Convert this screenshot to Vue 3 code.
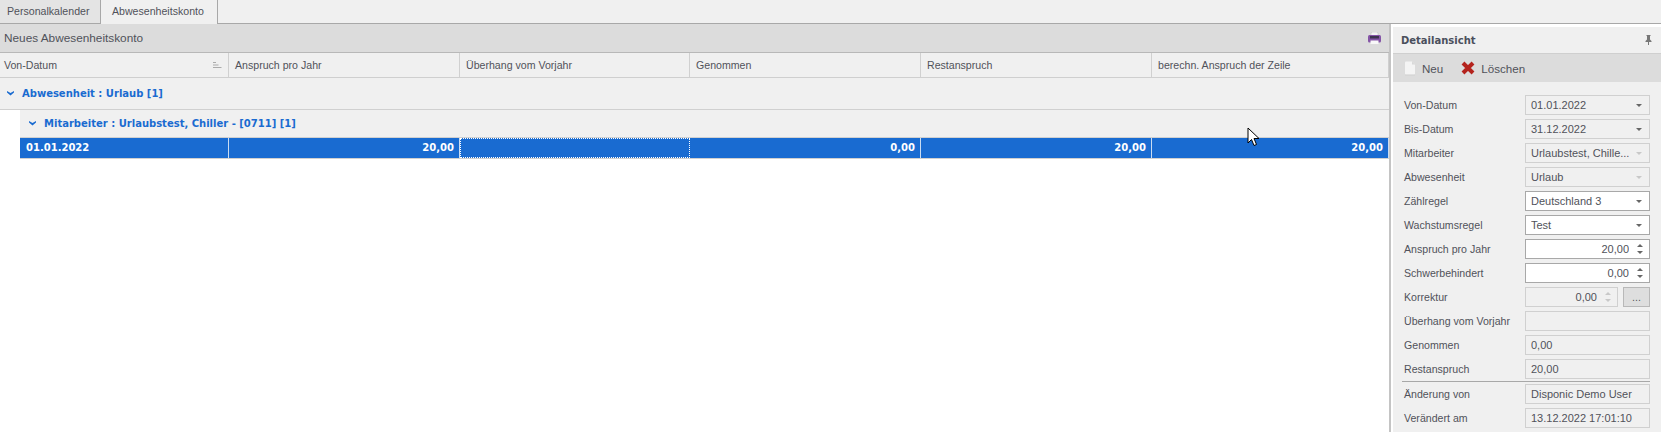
<template>
  <div class="app">
    <div class="tabs">
      <div class="tab">Personalkalender</div>
      <div class="tab active">Abwesenheitskonto</div>
    </div>
    <div class="body">
      <div class="main">
        <div class="title-bar">
          <span>Neues Abwesenheitskonto</span>
          <svg class="printer" width="13" height="12" viewBox="0 0 13 12">
            <path d="M3 4v-2.500q0-1.500 1.500-1.500h4q1.500 0 1.500 1.500v2.500z" fill="#f4f4f4" stroke="#bbb" stroke-width="0.500" />
            <rect x="0" y="3" width="13" height="7.500" rx="1.500" fill="#8454a6" />
            <rect x="2" y="4" width="9" height="2.500" fill="#3d3350" />
            <rect x="2.500" y="8.500" width="8" height="3.500" fill="#f8f8f8" />
          </svg>
        </div>
        <div class="grid-head">
          <div v-for="(c, i) in columns" :key="c" class="head-cell" :style="{ width: widths[i] + 'px' }">
            {{ c }}
            <svg v-if="i === 0" class="sort" width="9" height="7" viewBox="0 0 9 7">
              <path d="M0 .5h3M0 3h5.500M0 5.500h8.500" stroke="#aaa" fill="none" />
            </svg>
          </div>
        </div>
        <div class="group first">
          <svg class="chev" width="7" height="5" viewBox="0 0 7 5"><path d="M0 0l3.500 2 3.500-2v1.500l-3.500 3-3.500-3z" fill="#1a6bd0" /></svg>
          Abwesenheit : Urlaub [1]
        </div>
        <div class="indented">
          <div class="group second">
            <svg class="chev" width="7" height="5" viewBox="0 0 7 5"><path d="M0 0l3.500 2 3.500-2v1.500l-3.500 3-3.500-3z" fill="#1a6bd0" /></svg>
            Mitarbeiter : Urlaubstest, Chiller - [0711] [1]
          </div>
          <div class="row">
            <div v-for="(v, i) in rowCells" :key="i" class="cell" :class="{ left: i === 0, focus: i === 2 }" :style="{ width: (i === 0 ? widths[0] - 20 : widths[i]) + 'px' }">{{ v }}</div>
          </div>
        </div>
      </div>
      <div class="side">
        <div class="side-title">
          <span>Detailansicht</span>
          <svg width="7" height="10" viewBox="0 0 7 10">
            <path d="M1.500 0h4v1h-.5v3.500l1.500 1.500v1h-2.500v3h-1v-3h-2.500v-1l1.500-1.500v-3.500h-.5z" fill="#777" />
          </svg>
        </div>
        <div class="side-tools">
          <span class="tool new">
            <svg width="12" height="15" viewBox="0 0 12 15">
              <path d="M1 1.500q0-1 1-1h6l3 3v9.500q0 1-1 1h-8q-1 0-1-1z" fill="#f4f4f4" />
              <path d="M8 .5v3h3z" fill="#d8d8d8" />
              <path d="M1 14h10" stroke="#cfcfcf" />
            </svg>
            Neu
          </span>
          <span class="tool">
            <svg width="14" height="14" viewBox="0 0 14 14">
              <path d="M2 2l10 10M12 2l-10 10" stroke="#b4231d" stroke-width="4" />
            </svg>
            Löschen
          </span>
        </div>
        <div class="form">
          <div v-for="f in fields" :key="f.label" class="field" :class="f.cls">
            <label>{{ f.label }}</label>
            <div class="input" :class="[f.kind, { off: f.off }]">
              <span class="val">{{ f.value }}</span>
              <svg v-if="f.kind === 'combo'" class="caret" width="6" height="3" viewBox="0 0 6 3"><path d="M0 0h6l-3 3z" /></svg>
              <span v-if="f.kind === 'number'" class="spin">
                <svg width="6" height="3" viewBox="0 0 6 3"><path d="M0 3h6l-3-3z" /></svg>
                <svg width="6" height="3" viewBox="0 0 6 3"><path d="M0 0h6l-3 3z" /></svg>
              </span>
            </div>
            <button v-if="f.more" class="more">...</button>
          </div>
        </div>
      </div>
    </div>
    <svg class="cursor" width="13" height="20" viewBox="0 0 13 20">
      <path d="M1 1v15l3.500-3.500 2.500 6 2.500-1-2.500-6h5z" fill="#fff" stroke="#000" stroke-width="1" />
    </svg>
  </div>
</template>

<script setup>
const columns = ['Von-Datum', 'Anspruch pro Jahr', 'Überhang vom Vorjahr', 'Genommen', 'Restanspruch', 'berechn. Anspruch der Zeile']
const widths = [229, 231, 230, 231, 231, 237]
const rowCells = ['01.01.2022', '20,00', '', '0,00', '20,00', '20,00']
const fields = [
  { label: 'Von-Datum', value: '01.01.2022', kind: 'combo' },
  { label: 'Bis-Datum', value: '31.12.2022', kind: 'combo' },
  { label: 'Mitarbeiter', value: 'Urlaubstest, Chille...', kind: 'combo', off: true },
  { label: 'Abwesenheit', value: 'Urlaub', kind: 'combo', off: true },
  { label: 'Zählregel', value: 'Deutschland 3', kind: 'combo', cls: 'white' },
  { label: 'Wachstumsregel', value: 'Test', kind: 'combo', cls: 'white' },
  { label: 'Anspruch pro Jahr', value: '20,00', kind: 'number', cls: 'white tall' },
  { label: 'Schwerbehindert', value: '0,00', kind: 'number', cls: 'white' },
  { label: 'Korrektur', value: '0,00', kind: 'number', off: true, more: true, cls: 'tall' },
  { label: 'Überhang vom Vorjahr', value: '', kind: 'text' },
  { label: 'Genommen', value: '0,00', kind: 'text' },
  { label: 'Restanspruch', value: '20,00', kind: 'text' },
  { label: 'Änderung von', value: 'Disponic Demo User', kind: 'text', cls: 'sep' },
  { label: 'Verändert am', value: '13.12.2022 17:01:10', kind: 'text' }
]
</script>

<style>
html, body { margin: 0; background: #fff; }
</style>

<style scoped>
.app { position: relative; width: 1661px; height: 432px; overflow: hidden; font-family: "Liberation Sans", Arial, sans-serif; font-size: 10.600px; color: #50525a; background: #fff; }
.tabs { display: flex; height: 23px; background: #f0f0f0; border-bottom: 1px solid #a8a8a8; }
.tab { width: 101px; height: 23px; box-sizing: border-box; padding-left: 7px; line-height: 22px; background: #e4e4e4; border-right: 1px solid #a8a8a8; }
.tab.active { width: 117px; height: 24px; padding-left: 11px; background: #f0f0f0; }
.body { display: flex; height: 408px; }
.main { flex: none; width: 1391px; box-sizing: border-box; border-right: 2px solid #c4c4c4; }
.title-bar { display: flex; align-items: center; justify-content: space-between; height: 29px; padding: 0 8px 0 4px; background: #dcdcdc; border-bottom: 1px solid #b8b8b8; box-sizing: border-box; font-size: 11.800px; }
.grid-head { display: flex; height: 25px; background: #f0f0f0; border-bottom: 1px solid #cfcfcf; box-sizing: border-box; }
.head-cell { position: relative; box-sizing: border-box; padding-left: 4px; line-height: 24px; border-right: 1px solid #d0d0d0; flex: none; }
.head-cell + .head-cell { padding-left: 6px; }
.sort { position: absolute; right: 6px; top: 9px; }
.group { display: flex; align-items: center; gap: 8px; box-sizing: border-box; background: #f0f0f0; color: #1a6bd0; font-family: "DejaVu Sans", sans-serif; font-size: 10px; font-weight: 700; border-bottom: 1px solid #d0d0d0; }
.group.first { height: 32px; padding-left: 7px; }
.indented { margin-left: 20px; }
.group.second { height: 28px; padding-left: 9px; }
.row { display: flex; height: 21px; background: #196bd1; border-bottom: 1px solid #d0d0d0; box-sizing: border-box; color: #fff; font-family: "DejaVu Sans", sans-serif; font-size: 10px; font-weight: 700; }
.cell { box-sizing: border-box; padding: 0 5px; text-align: right; line-height: 20px; border-right: 1px solid #c9dcf2; flex: none; }
.cell.left { text-align: left; padding-left: 6px; }
.cell.focus { border: 1px dotted #fff; }
.side { flex: 1; margin-left: 2px; margin-top: 3px; background: #f0f0f0; }
.side-title { display: flex; align-items: center; justify-content: space-between; height: 26px; padding: 0 9px 0 8px; color: #4a4f5c; font-family: "DejaVu Sans", sans-serif; font-size: 10px; font-weight: 700; }
.side-tools { display: flex; align-items: center; gap: 18px; height: 29px; padding-left: 11px; background: #dcdcdc; border-top: 1px solid #cfcfcf; box-sizing: border-box; font-size: 11.600px; }
.tool { display: flex; align-items: center; gap: 6px; }
.form { padding: 13px 11px 0 11px; }
.field { display: flex; align-items: center; height: 20px; margin-bottom: 4px; }
.field.tall { margin-top: 1px; }
.field.sep { position: relative; margin-top: 5px; }
.field.sep::before { content: ""; position: absolute; left: -2px; right: 0; top: -3px; height: 1px; background: #a8a8a8; }
label { width: 121px; flex: none; }
.input { display: flex; flex: 1; align-items: center; height: 20px; box-sizing: border-box; padding: 0 5px; border: 1px solid #d0d0d0; font-size: 11px; }
.white .input { background: #fff; border-color: #a8a8a8; }
.val { flex: 1; white-space: nowrap; overflow: hidden; }
.caret { margin-left: 4px; margin-right: 2px; fill: #666; }
.off .caret, .off .spin { fill: #c8c8c8; }
.spin { display: flex; flex-direction: column; gap: 4px; margin-left: 8px; margin-right: 1px; fill: #666; }
.spin svg { display: block; }
.number .val { text-align: right; }
.more { width: 27px; height: 20px; margin-left: 5px; padding: 0; flex: none; background: #dedede; border: 1px solid #b8b8b8; color: #555; font: inherit; line-height: 18px; }
.cursor { position: absolute; left: 1247px; top: 127px; }
</style>
